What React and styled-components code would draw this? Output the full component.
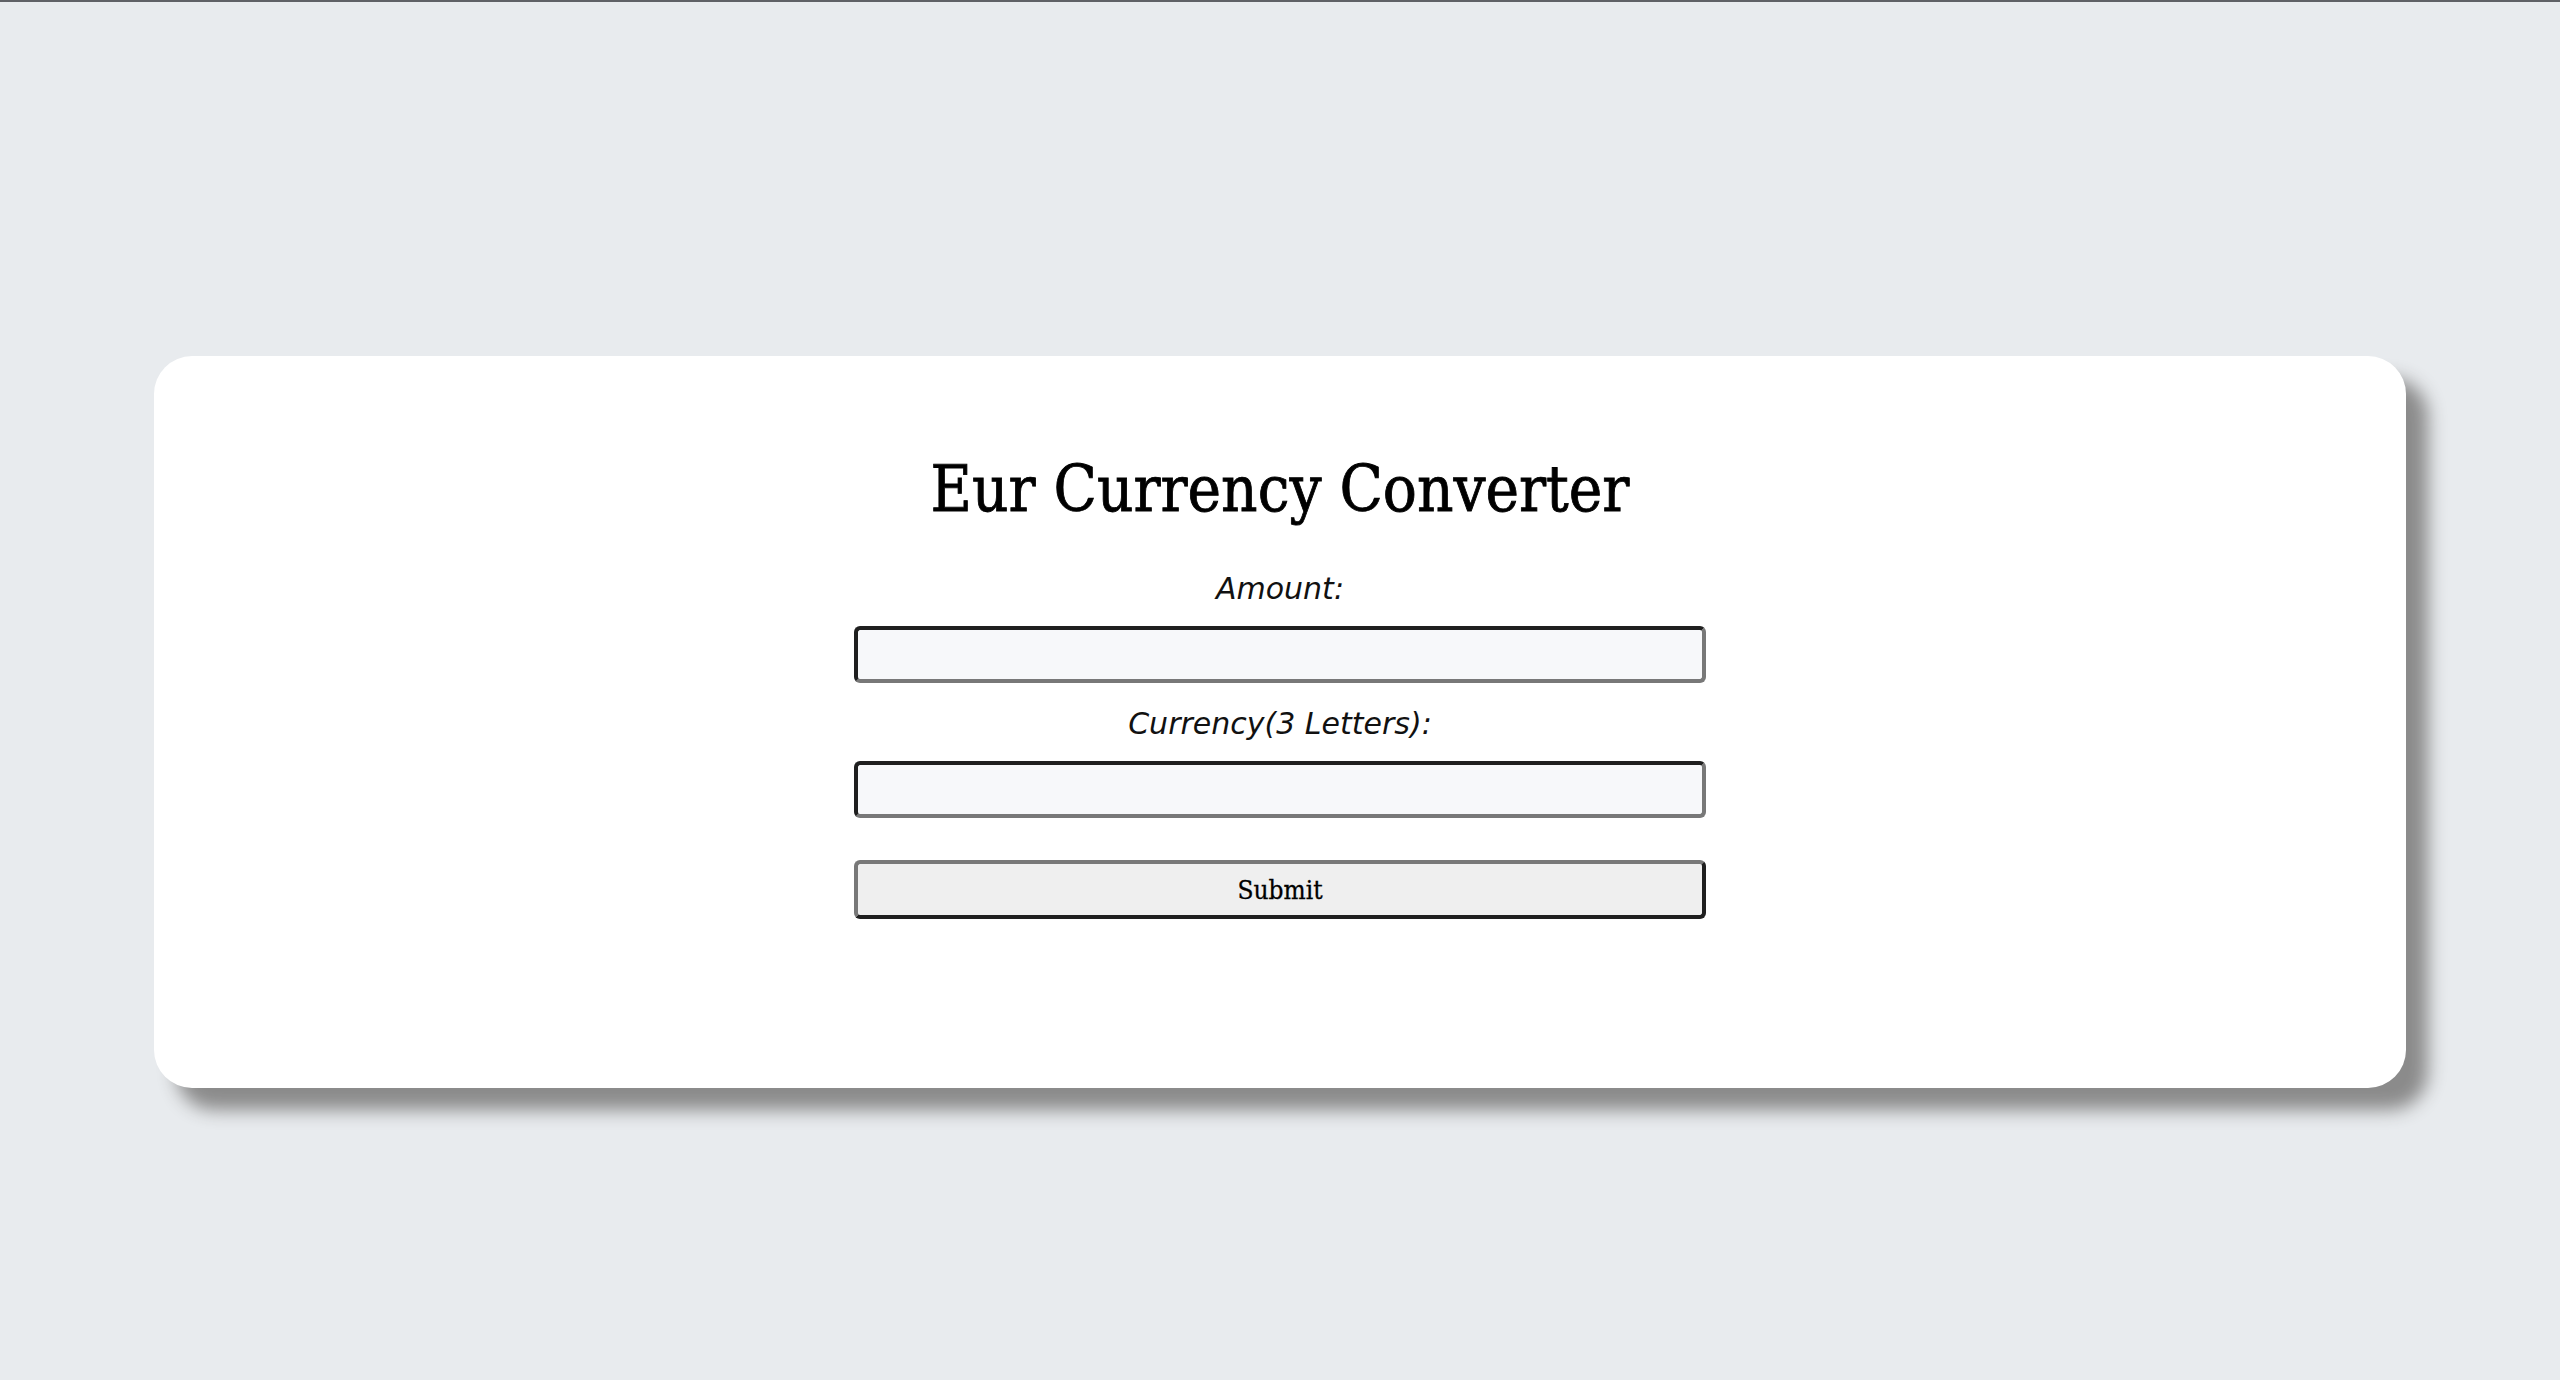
import React from "react";
import styled, { createGlobalStyle } from "styled-components";

const GlobalStyle = createGlobalStyle`
  html, body {
    margin: 0;
    padding: 0;
  }
  body {
    background: #e8ebee;
    font-family: "DejaVu Serif", serif;
  }
  * {
    box-sizing: border-box;
  }
`;

const Page = styled.div`
  min-height: 100vh;
  border-top: 2px solid #5f6166;
  padding-top: 354px;
`;

const Card = styled.main`
  width: 88%;
  height: 732px;
  margin: 0 auto;
  background: #ffffff;
  border-radius: 38px;
  box-shadow: 22px 22px 18px #8b8b8b;
  padding-top: 96px;
  display: flex;
  flex-direction: column;
  align-items: center;
`;

const Title = styled.h1`
  margin: 0 0 38px;
  font-family: "DejaVu Serif Condensed", "DejaVu Serif", serif;
  font-stretch: condensed;
  font-weight: normal;
  font-size: 63px;
  line-height: 76px;
  color: #000;
  -webkit-text-stroke: 0.8px #000;
`;

const Form = styled.form`
  display: flex;
  flex-direction: column;
  align-items: center;
  width: 852px;
`;

const Label = styled.label`
  font-family: "DejaVu Sans", sans-serif;
  font-style: italic;
  font-weight: 200;
  font-size: 30px;
  line-height: 40px;
  color: #111;
  padding-top: 3px;
  margin-bottom: 17px;
`;

const Input = styled.input`
  width: 100%;
  height: 57px;
  margin: 0 0 ${(p) => p.$gap}px;
  padding: 0 12px;
  background: #f7f8fa;
  border-style: solid;
  border-width: 4px;
  border-color: #1f1f1f #787878 #787878 #1f1f1f;
  border-radius: 6px;
  font-size: 26px;
  outline: none;
`;

const Button = styled.button`
  width: 100%;
  height: 59px;
  background: #efefef;
  border-style: solid;
  border-width: 4px;
  border-color: #787878 #1f1f1f #1f1f1f #787878;
  border-radius: 6px;
  font-family: "DejaVu Serif Condensed", "DejaVu Serif", serif;
  font-stretch: condensed;
  font-size: 26px;
  color: #000;
  -webkit-text-stroke: 0.3px #000;
  cursor: pointer;
`;

export default function App() {
  return (
    <>
      <GlobalStyle />
      <Page>
        <Card>
          <Title>Eur Currency Converter</Title>
          <Form onSubmit={(e) => e.preventDefault()}>
            <Label htmlFor="amount">Amount:</Label>
            <Input id="amount" type="text" $gap={18} />
            <Label htmlFor="currency">Currency(3 Letters):</Label>
            <Input id="currency" type="text" $gap={42} />
            <Button type="submit">Submit</Button>
          </Form>
        </Card>
      </Page>
    </>
  );
}
